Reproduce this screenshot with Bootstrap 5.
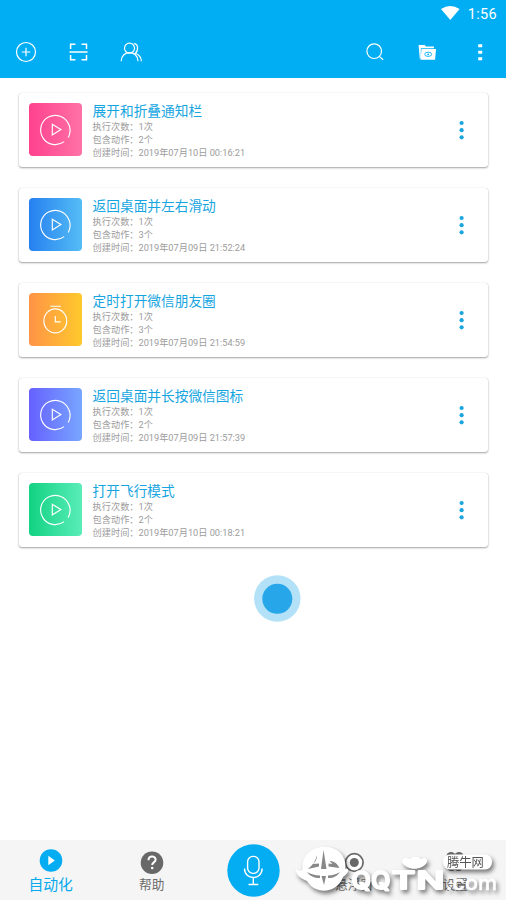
<!DOCTYPE html>
<html lang="zh-CN">
<head>
<meta charset="utf-8">
<meta name="viewport" content="width=device-width, initial-scale=1">
<title>自动化</title>
<link href="https://cdn.jsdelivr.net/npm/bootstrap@5.3.0/dist/css/bootstrap.min.css" rel="stylesheet">
<style>
body{font-family:Roboto,"Noto Sans CJK SC",sans-serif;background:#fff;height:900px;overflow:hidden}
svg{display:block;flex:none}
.top-area{background:#02aef3;color:#fff;height:78px}
.status{height:26px;font-size:14.5px;padding-right:9px;letter-spacing:.35px}
.status span{padding-top:3px}
.tools{height:52px;padding:0 14px 0 13px}
.tools svg{fill:none;stroke:#fff;stroke-width:1.2}
.gap-icon{margin-left:26px}
.more{margin-left:37px;margin-right:9.5px}
.tasks{padding:15px 18px 0 19px;gap:21px}
.task{height:74px;border:0;border-radius:3px;box-shadow:0 1px 2px rgba(0,0,0,.36),0 0 1px rgba(0,0,0,.18);padding:10px 23.5px 10px 10px}
.tile{width:53px;height:53px;border-radius:4px;fill:none;stroke:#fff;stroke-width:1.15;margin-right:10.6px}
.pink{background:linear-gradient(90deg,#ff418e,#ff72a6)}
.blue{background:linear-gradient(90deg,#2580f0,#55bdf5)}
.orange{background:linear-gradient(90deg,#ff9347,#ffc92c)}
.violet{background:linear-gradient(90deg,#6660ff,#78a6ff)}
.green{background:linear-gradient(90deg,#12d282,#5aedb9)}
.title{font-size:13.7px;line-height:18px;color:#16a5df;margin-top:-1px}
.meta{font-size:9.2px;line-height:13px;color:#9c9c9c;white-space:nowrap}
.bottom{height:60px;background:#f5f5f5;color:#6b6b6b}
.tab{width:101.2px;font-size:12.7px;line-height:18px}
.tab svg{margin:11px 0 1px}
.tab.on{color:#04a9ee;font-size:14.8px}
.tab.on svg{margin:9px 0 3px}
.tab .mic{margin:4px 0 0 1px}
.touch{left:254px;top:575px}
.stamp{left:290px;top:840px;filter:drop-shadow(2px 3px 2px rgba(0,0,0,.5))}
</style>
<script src="https://cdn.jsdelivr.net/npm/bootstrap@5.3.0/dist/js/bootstrap.bundle.min.js"></script>
</head>
<body class="d-flex flex-column position-relative">
<svg width="0" height="0" class="position-absolute"><defs>
<g id="play"><path d="M39.2 34.5A14.6 14.6 0 0 0 40.7 24M39.7 21.3A14.6 14.6 0 1 0 35.1 38.6M40.8 24.3A14.6 14.6 0 0 0 39.7 21.3"/><path d="M23.3 21.3v10.6l8.6-5.3z"/></g>
<g id="dots" fill="#1ba5de"><circle cx="2.6" cy="3" r="2.1"/><circle cx="2.6" cy="10.2" r="2.1"/><circle cx="2.6" cy="17.3" r="2.1"/></g>
</defs></svg>
<header class="top-area">
<div class="status d-flex justify-content-end align-items-center">
<svg width="19" height="15" viewBox="0 0 19 15" class="me-2"><path fill="#fff" d="M0 3Q9.3-3 18.6 3L9.3 14z"/></svg><span>1:56</span>
</div>
<div class="tools d-flex align-items-center">
<svg width="26" height="26" viewBox="0 0 26 26"><circle cx="13" cy="13" r="9.5"/><path d="M13 8.7v8.6M8.7 13h8.6"/></svg>
<svg width="26" height="26" viewBox="0 0 26 26" class="gap-icon"><path stroke-width="1.5" d="M5.6 10V5.3h4.8M16.5 5.3h5V10M5.6 16v4.8h4.8M16.5 20.8h5V16M4.5 13h18"/></svg>
<svg width="28" height="26" viewBox="0 0 28 26" class="gap-icon"><circle cx="12.5" cy="9.2" r="5"/><path d="M4.2 22.2C4.4 10.8 20.8 10.8 21 22.2M16.8 4.6c4.4 0 5 6.5 1.6 9.7 3.8 1.5 5.8 4.1 6 7.9"/></svg>
<svg width="26" height="26" viewBox="0 0 26 26" class="ms-auto"><circle cx="12.2" cy="12.2" r="7.3"/><path d="m17.6 17.6 3.5 3.2"/></svg>
<svg width="26" height="26" viewBox="0 0 26 26" class="gap-icon"><path fill="#fff" stroke="none" d="M4.6 6h6.1l1.3 1.6h8v1.6H6.8v9.5L5.8 20z"/><path fill="#fff" stroke="none" d="M7.5 10H22l-1 10.7H6.5z"/><ellipse cx="14.2" cy="15.3" rx="3.5" ry="2.1" stroke="#02aef3" stroke-width=".9"/><circle cx="14.2" cy="15.3" r=".9" fill="#02aef3" stroke="none"/></svg>
<svg width="6" height="20" viewBox="0 0 6 20" class="more"><path fill="#fff" stroke="none" d="M1.2 2.2h4v3.1h-4zM1.2 8.7h4v3.1h-4zM1.2 15.2h4v3.1h-4z"/></svg>
</div>
</header>
<main class="tasks d-flex flex-column flex-grow-1">
<article class="card task flex-row align-items-start"><svg class="tile pink" viewBox="0 0 53 53"><use href="#play"/></svg><div><div class="title">展开和折叠通知栏</div><div class="meta">执行次数：1次</div><div class="meta">包含动作：2个</div><div class="meta">创建时间：2019年07月10日 00:16:21</div></div><svg class="ms-auto align-self-center" width="6" height="20"><use href="#dots"/></svg></article>
<article class="card task flex-row align-items-start"><svg class="tile blue" viewBox="0 0 53 53"><use href="#play"/></svg><div><div class="title">返回桌面并左右滑动</div><div class="meta">执行次数：1次</div><div class="meta">包含动作：3个</div><div class="meta">创建时间：2019年07月09日 21:52:24</div></div><svg class="ms-auto align-self-center" width="6" height="20"><use href="#dots"/></svg></article>
<article class="card task flex-row align-items-start"><svg class="tile orange" viewBox="0 0 53 53"><ellipse cx="26.3" cy="27.9" rx="11.4" ry="12"/><path d="M21.3 13.2h10.5M26.3 22.9v6h5.3"/></svg><div><div class="title">定时打开微信朋友圈</div><div class="meta">执行次数：1次</div><div class="meta">包含动作：3个</div><div class="meta">创建时间：2019年07月09日 21:54:59</div></div><svg class="ms-auto align-self-center" width="6" height="20"><use href="#dots"/></svg></article>
<article class="card task flex-row align-items-start"><svg class="tile violet" viewBox="0 0 53 53"><use href="#play"/></svg><div><div class="title">返回桌面并长按微信图标</div><div class="meta">执行次数：1次</div><div class="meta">包含动作：2个</div><div class="meta">创建时间：2019年07月09日 21:57:39</div></div><svg class="ms-auto align-self-center" width="6" height="20"><use href="#dots"/></svg></article>
<article class="card task flex-row align-items-start"><svg class="tile green" viewBox="0 0 53 53"><use href="#play"/></svg><div><div class="title">打开飞行模式</div><div class="meta">执行次数：1次</div><div class="meta">包含动作：2个</div><div class="meta">创建时间：2019年07月10日 00:18:21</div></div><svg class="ms-auto align-self-center" width="6" height="20"><use href="#dots"/></svg></article>
</main>
<svg class="touch position-absolute" width="47" height="47"><circle cx="23.3" cy="23.5" r="23.2" fill="#b3e1f8"/><circle cx="23.3" cy="23.8" r="15" fill="#27a7e9"/></svg>
<nav class="bottom d-flex">
<div class="tab on d-flex flex-column align-items-center"><svg width="24" height="24" viewBox="0 0 24 24"><circle cx="12" cy="11.5" r="11.3" fill="#04adf2"/><path d="M9.3 6.7v9.6l6.5-4.8z" fill="#fff"/></svg>自动化</div>
<div class="tab d-flex flex-column align-items-center"><svg width="24" height="24" viewBox="0 0 24 24"><circle cx="12" cy="11.7" r="11.3" fill="#686868"/><path d="M8.5 9.3c0-5 7.1-4.7 7.1-.7 0 3-3.4 2.6-3.4 5.4" fill="none" stroke="#fff" stroke-width="2"/><circle cx="12.2" cy="17" r="1.3" fill="#fff"/></svg>帮助</div>
<div class="tab d-flex justify-content-center"><svg class="mic" width="53" height="53" viewBox="0 0 53 53"><circle cx="26.5" cy="26.5" r="26.2" fill="#04adf2"/><g fill="none" stroke="#fff" stroke-width="1.4"><rect x="20.6" y="12.4" width="11.4" height="17" rx="5.3"/><path d="M17.5 24.5c0 12 17.6 12 17.6 0M26.3 33.7v6.8M21.5 40.5h9.8"/></g></svg></div>
<div class="tab d-flex flex-column align-items-center"><svg width="24" height="24" viewBox="0 0 24 24"><circle cx="12.3" cy="11.5" r="8.8" fill="#fff" stroke="#686868" stroke-width="1.7"/><circle cx="12.3" cy="11.5" r="4.5" fill="#686868"/></svg>悬浮窗</div>
<div class="tab d-flex flex-column align-items-center"><svg width="24" height="24" viewBox="0 0 24 24" fill="#686868"><circle cx="8" cy="5.5" r="4.5"/><circle cx="16" cy="5.5" r="4.5"/><circle cx="8.5" cy="15.5" r="4.5"/><circle cx="15.5" cy="15.5" r="4.5"/></svg>设置</div>
</nav>
<svg class="stamp position-absolute" width="216" height="60" viewBox="0 0 216 60">
<path fill="#fff" d="M12.5 26C14 2 51 0 55 22c.5 2 .5 5 0 7 5-1 4 4-2 8C47 54 25 55 17 41 9 38 6 34 6 29c2 2 4 2 6.5 1z"/>
<g fill="#888"><path d="M33.5 10 31 29h5.5zM31.5 36H36l-2 9z"/><path d="M27 15c-1 5-4 10-9 14l11-2.5v-3l-6 .5c3-3 4-5 4-9zM39.5 21c5 0 8 3 10 7l-11-1.5v-3l4 .5zM17 32c4 2 8 3.5 13 3.5V38c-6 0-10-2-13-6zM50 32c-4 2-7 3.5-12 3.5V38c6 0 9-2 12-6z"/></g>
<g fill="#fff" stroke="#fff" stroke-width="2.2" stroke-linejoin="round" font-family="Inter,sans-serif" font-weight="500">
<text transform="translate(61.5 49)scale(1.03 1)" font-size="24.5">QQ</text>
<text transform="translate(102 49)scale(1.45 1)" font-size="24.5">T</text>
<text transform="translate(126.500 49)scale(1.5 1)" font-size="24.5">N</text></g>
<text x="156" y="50" font-size="20" font-family="Inter,sans-serif" font-weight="500" fill="#fff" stroke="#fff" stroke-width=".4" textLength="51" lengthAdjust="spacingAndGlyphs">.com</text>
<path fill="#fff" d="M112 22c0-4 4-5 8-3 3-3 8-3 11 0 4-2 7 0 6 3-4 9-21 9-25 0z"/>
<rect x="153" y="14.5" width="49" height="15" rx="7" fill="#fff"/>
<text x="157" y="27" font-size="12.3" font-family="Noto Sans CJK SC,sans-serif" fill="#555">腾牛网</text>
</svg>
</body>
</html>
